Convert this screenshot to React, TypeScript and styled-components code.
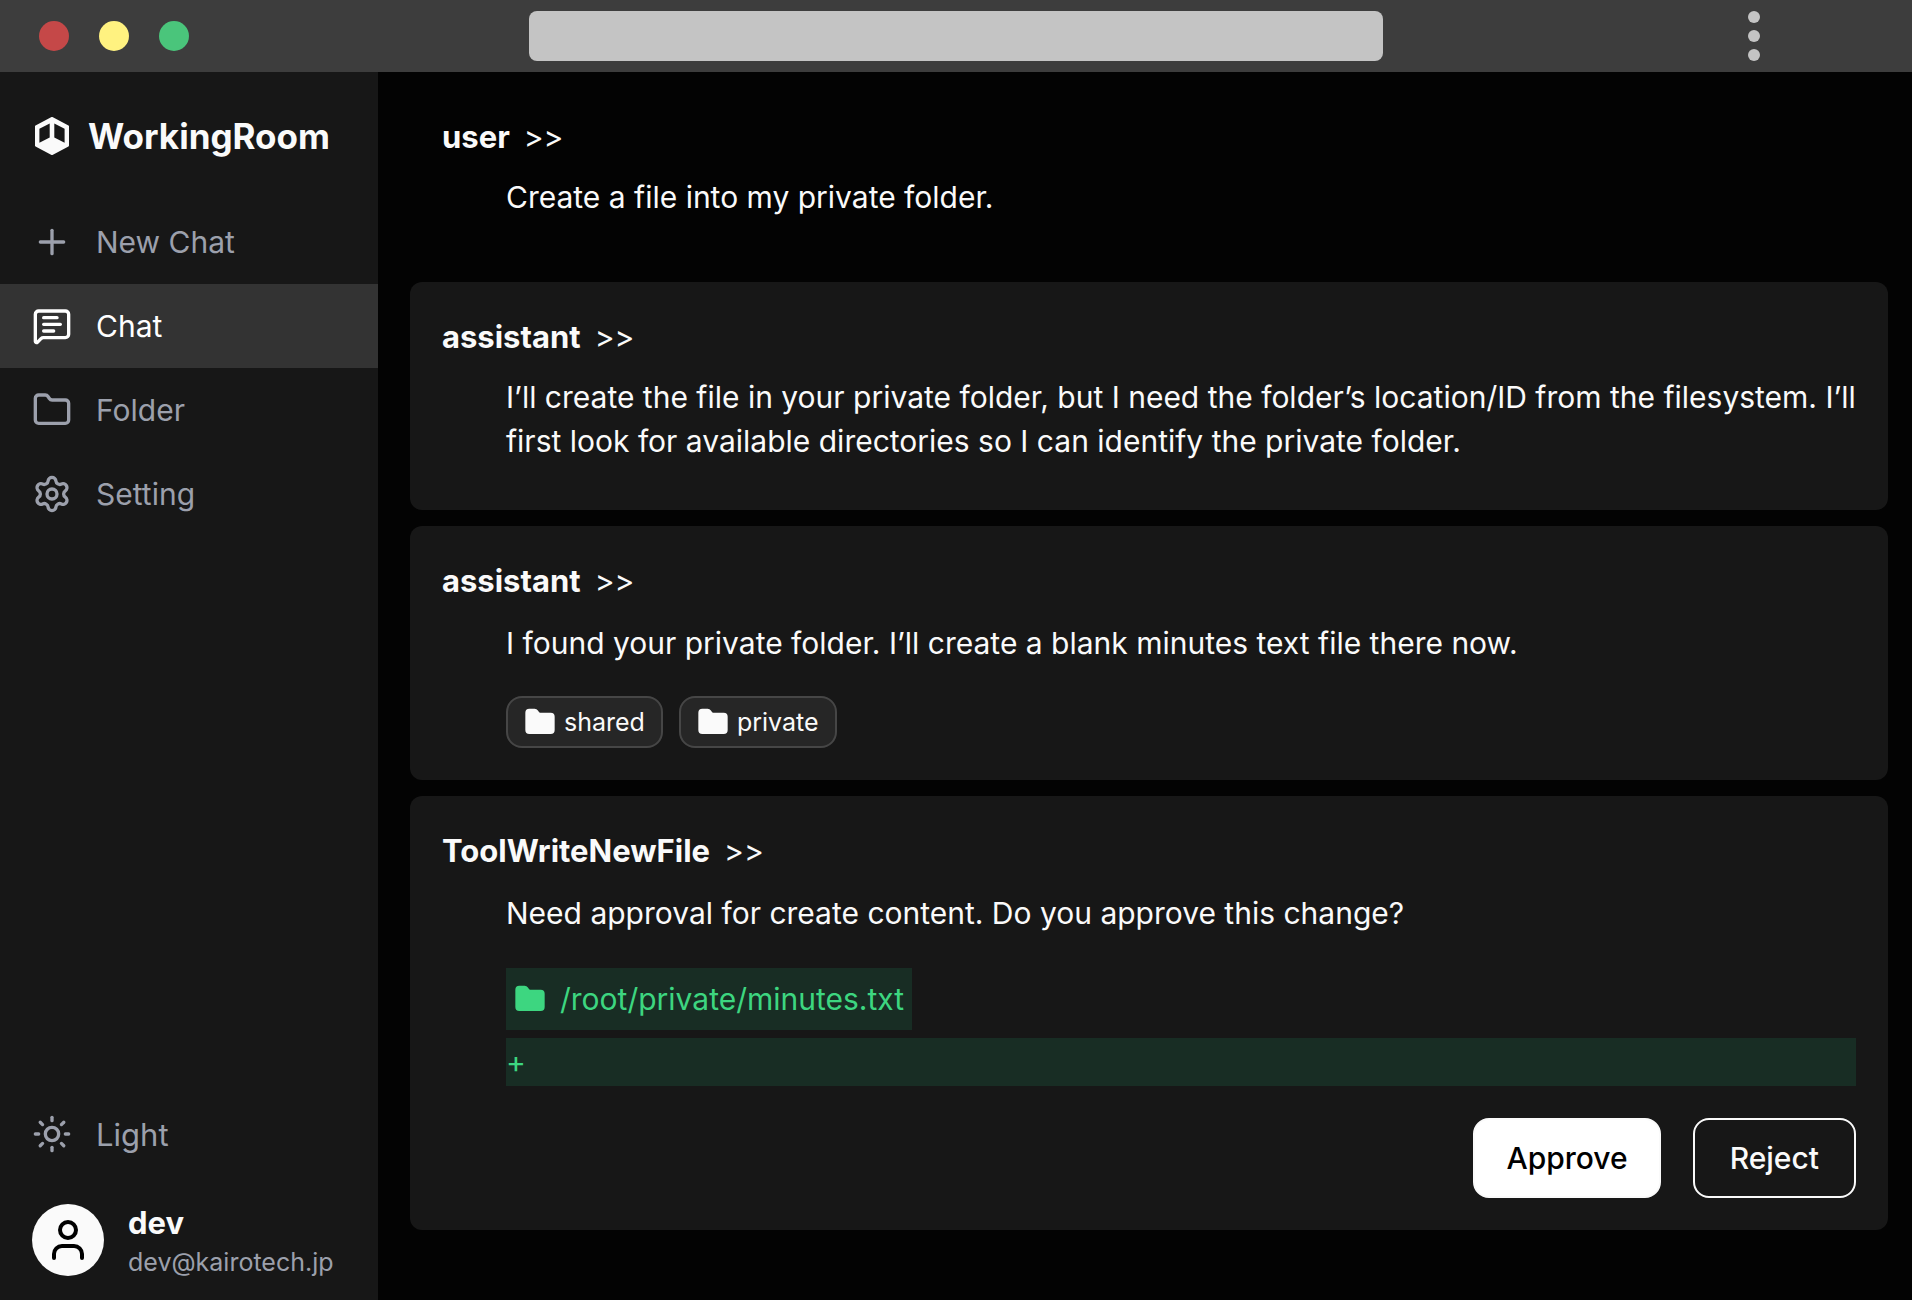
import React from "react";
import styled, { createGlobalStyle, css } from "styled-components";
import { Folder, MessageSquareText, Plus, Settings, Sun, User } from "lucide-react";

const GlobalStyle = createGlobalStyle`
  *, *::before, *::after { box-sizing: border-box; }
  body {
    margin: 0;
    background: #030303;
    color: #fafafa;
    font-family: Inter, "Liberation Sans", sans-serif;
    font-size: 30px;
  }
  button, input { font: inherit; color: inherit; }
  h1, p, ul { margin: 0; padding: 0; }
`;

const Window = styled.div`
  display: flex;
  flex-direction: column;
  min-height: 100vh;
`;

const TitleBar = styled.header`
  display: grid;
  grid-template-columns: 31fr 50fr 31fr;
  align-items: center;
  height: 72px;
  background: #3d3d3d;
`;

const Lights = styled.div`
  display: flex;
  gap: 30px;
  padding-left: 39px;
`;

const LightButton = styled.button<{ $color: string }>`
  width: 30px;
  height: 30px;
  padding: 0;
  border: 0;
  border-radius: 50%;
  background: ${(p) => p.$color};
`;

const Address = styled.input`
  width: 100%;
  height: 50px;
  padding: 0 16px;
  border: 0;
  border-radius: 8px;
  background: #c4c4c4;
  color: #171717;
`;

const MenuButton = styled.button`
  display: flex;
  flex-direction: column;
  justify-self: end;
  gap: 7px;
  margin-right: 152px;
  padding: 0;
  border: 0;
  background: none;
`;

const Dot = styled.span`
  width: 12px;
  height: 12px;
  border-radius: 50%;
  background: #c4c4c4;
`;

const Body = styled.div`
  display: flex;
  flex: 1;
`;

const Sidebar = styled.aside`
  display: flex;
  flex-direction: column;
  flex: 0 0 378px;
  padding: 44px 0 24px;
  background: #171717;
`;

const Brand = styled.div`
  display: flex;
  align-items: center;
  gap: 16px;
  height: 40px;
  margin-bottom: 44px;
  padding-left: 32px;
`;

const BrandName = styled.h1`
  font-size: 35px;
  font-weight: 700;
  line-height: 38px;
`;

const navItem = css`
  display: flex;
  align-items: center;
  gap: 24px;
  width: 100%;
  height: 84px;
  padding: 0 32px;
  border: 0;
  text-align: left;
  text-decoration: none;
`;

const NavLink = styled.a<{ $active?: boolean }>`
  ${navItem}
  background: ${(p) => (p.$active ? "#333333" : "transparent")};
  color: ${(p) => (p.$active ? "#ffffff" : "#9ca0ac")};
`;

const ThemeButton = styled.button`
  ${navItem}
  height: 76px;
  margin-top: auto;
  background: none;
  color: #9ca0ac;
  font-size: 31px;
`;

const Account = styled.div`
  display: flex;
  align-items: center;
  gap: 24px;
  margin-top: 32px;
  padding-left: 32px;
`;

const Avatar = styled.div`
  display: grid;
  place-items: center;
  width: 72px;
  height: 72px;
  border-radius: 50%;
  background: #fafafa;
  color: #000000;
`;

const AccountText = styled.div`
  display: flex;
  flex-direction: column;
  gap: 6px;
`;

const AccountName = styled.p`
  font-size: 31px;
  font-weight: 700;
  line-height: 38px;
`;

const AccountMail = styled.p`
  color: #9ca0ac;
  font-size: 25px;
  line-height: 28px;
`;

const Thread = styled.main`
  display: flex;
  flex: 1;
  flex-direction: column;
  gap: 16px;
  min-width: 0;
  padding: 10px 24px 24px 32px;
`;

const Card = styled.article<{ $plain?: boolean }>`
  padding: 32px;
  border-radius: 12px;
  background: ${(p) => (p.$plain ? "transparent" : "#171717")};
`;

const Speaker = styled.header`
  display: flex;
  align-items: center;
  gap: 14px;
  line-height: 46px;
`;

const SpeakerName = styled.strong`
  font-size: 31px;
  font-weight: 700;
`;

const Content = styled.div`
  margin-top: 15px;
  padding-left: 64px;
`;

/* Running text may reach a little further right than the blocks below it. */
const Text = styled.p<{ $last?: boolean }>`
  margin-right: -8px;
  margin-bottom: ${(p) => (p.$last ? "15px" : "29px")};
  line-height: ${(p) => (p.$last ? "44px" : "48px")};
`;

const Chips = styled.ul`
  display: flex;
  gap: 16px;
  list-style: none;
`;

const Chip = styled.button`
  display: flex;
  align-items: center;
  gap: 8px;
  height: 52px;
  padding: 0 16px;
  border: 2px solid #464646;
  border-radius: 16px;
  background: #262626;
  font-size: 25px;
  line-height: 48px;
`;

const Diff = styled.div`
  display: flex;
  flex-direction: column;
  align-items: flex-start;
  gap: 8px;
  padding-top: 2px;
  color: #3dd680;
`;

const DiffPath = styled.div`
  display: flex;
  align-items: center;
  gap: 14px;
  height: 62px;
  padding: 0 8px;
  background: #182d24;
`;

const DiffLine = styled.div`
  width: 100%;
  line-height: 48px;
  background: #182d24;
`;

const Actions = styled.div`
  display: flex;
  justify-content: flex-end;
  gap: 32px;
  margin-top: 32px;
`;

const ActionButton = styled.button<{ $primary?: boolean }>`
  height: 80px;
  padding: 0 ${(p) => (p.$primary ? "31px" : "35px")};
  border: 2px solid #fafafa;
  border-radius: 16px;
  background: ${(p) => (p.$primary ? "#ffffff" : "transparent")};
  color: ${(p) => (p.$primary ? "#000000" : "#fafafa")};
  font-weight: 500;
`;

const Logo = () => (
  <svg width="40" height="40" viewBox="0 0 40 40" aria-hidden="true">
    <path
      fill="#fafafa"
      stroke="#fafafa"
      strokeWidth="2"
      strokeLinejoin="round"
      d="M20 2 36 10.4V29.6L20 38 4 29.6V10.4Z"
    />
    <path fill="#171717" d="M17.7 7.6V21.4L7.4 26.8V12.8ZM22.3 7.6V21.4L32.6 26.8V12.8Z" />
  </svg>
);

const SolidFolder = () => <Folder size={32} fill="currentColor" aria-hidden="true" />;

const navItems = [
  { label: "New Chat", icon: Plus },
  { label: "Chat", icon: MessageSquareText, active: true },
  { label: "Folder", icon: Folder },
  { label: "Setting", icon: Settings },
];

type MessageProps = {
  from: string;
  text: string;
  plain?: boolean;
  children?: React.ReactNode;
};

const Message = ({ from, text, plain, children }: MessageProps) => (
  <Card $plain={plain}>
    <Speaker>
      <SpeakerName>{from}</SpeakerName>
      <span>&gt;&gt;</span>
    </Speaker>
    <Content>
      <Text $last={!children}>{text}</Text>
      {children}
    </Content>
  </Card>
);

export default function App() {
  return (
    <Window>
      <GlobalStyle />
      <TitleBar>
        <Lights>
          <LightButton $color="#c54848" aria-label="Close" />
          <LightButton $color="#fff280" aria-label="Minimize" />
          <LightButton $color="#4ac57b" aria-label="Maximize" />
        </Lights>
        <Address type="text" aria-label="Address" />
        <MenuButton aria-label="Menu">
          <Dot />
          <Dot />
          <Dot />
        </MenuButton>
      </TitleBar>
      <Body>
        <Sidebar>
          <Brand>
            <Logo />
            <BrandName>WorkingRoom</BrandName>
          </Brand>
          <nav>
            {navItems.map(({ label, icon: Icon, active }) => (
              <NavLink key={label} href="#" $active={active}>
                <Icon size={40} aria-hidden="true" />
                {label}
              </NavLink>
            ))}
          </nav>
          <ThemeButton>
            <Sun size={40} aria-hidden="true" />
            Light
          </ThemeButton>
          <Account>
            <Avatar>
              <User size={48} aria-hidden="true" />
            </Avatar>
            <AccountText>
              <AccountName>dev</AccountName>
              <AccountMail>dev@kairotech.jp</AccountMail>
            </AccountText>
          </Account>
        </Sidebar>
        <Thread>
          <Message plain from="user" text="Create a file into my private folder." />
          <Message
            from="assistant"
            text="I’ll create the file in your private folder, but I need the folder’s location/ID from the filesystem. I’ll first look for available directories so I can identify the private folder."
          />
          <Message
            from="assistant"
            text="I found your private folder. I’ll create a blank minutes text file there now."
          >
            <Chips>
              {["shared", "private"].map((name) => (
                <li key={name}>
                  <Chip>
                    <SolidFolder />
                    {name}
                  </Chip>
                </li>
              ))}
            </Chips>
          </Message>
          <Message
            from="ToolWriteNewFile"
            text="Need approval for create content. Do you approve this change?"
          >
            <Diff>
              <DiffPath>
                <SolidFolder />
                /root/private/minutes.txt
              </DiffPath>
              <DiffLine>+</DiffLine>
            </Diff>
            <Actions>
              <ActionButton $primary>Approve</ActionButton>
              <ActionButton>Reject</ActionButton>
            </Actions>
          </Message>
        </Thread>
      </Body>
    </Window>
  );
}
